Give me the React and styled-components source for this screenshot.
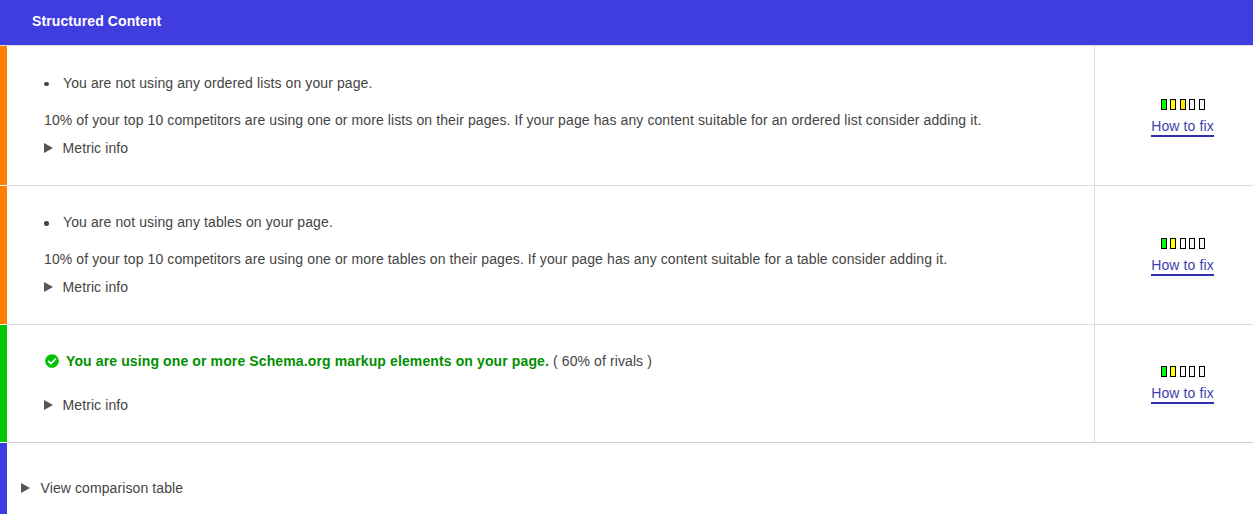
import React from 'react'
import styled, { createGlobalStyle } from 'styled-components'
import { FaCheckCircle } from 'react-icons/fa'

const GlobalStyle = createGlobalStyle`
  * { box-sizing: border-box; }
  html, body { margin: 0; background: #fff; }
  body {
    font-family: "Liberation Sans", Arial, sans-serif;
    font-size: 14px;
    line-height: 18px;
    letter-spacing: 0.1px;
    color: #444;
    overflow: hidden;
  }
`

const LEVEL_COLORS = ['#00ff00', '#ffff00', '#ffe600']

const metrics = [
  {
    accent: '#ff8000',
    level: 3,
    note: 'You are not using any ordered lists on your page.',
    detail: '10% of your top 10 competitors are using one or more lists on their pages. If your page has any content suitable for an ordered list consider adding it.',
  },
  {
    accent: '#ff8000',
    level: 2,
    note: 'You are not using any tables on your page.',
    detail: '10% of your top 10 competitors are using one or more tables on their pages. If your page has any content suitable for a table consider adding it.',
  },
  {
    accent: '#00c800',
    level: 2,
    passed: true,
    note: 'You are using one or more Schema.org markup elements on your page.',
    rivals: '( 60% of rivals )',
  },
]

const App = () => (
  <>
    <GlobalStyle />
    <Header>Structured Content</Header>
    {metrics.map((m) => (
      <Row key={m.note}>
        <Accent $color={m.accent} />
        <Main $passed={m.passed}>
          <Body $passed={m.passed}>
            {m.passed ? (
              <Passed>
                <FaCheckCircle size={14} color="#00c000" />
                <strong>{m.note}</strong>
                <span>{m.rivals}</span>
              </Passed>
            ) : (
              <>
                <Note><Bullet />{m.note}</Note>
                <p>{m.detail}</p>
              </>
            )}
            <Disclosure $top={m.passed ? 26 : 10}>
              <Triangle />
              Metric info
            </Disclosure>
          </Body>
          <Side $passed={m.passed}>
            <Meter>
              {[0, 1, 2, 3, 4].map((i) => (
                <Pip key={i} $color={i < m.level ? LEVEL_COLORS[i] : '#f7f7f7'} />
              ))}
            </Meter>
            <FixLink href="#">How to fix</FixLink>
          </Side>
        </Main>
      </Row>
    ))}
    <Footer>
      <Accent $color="#3f3de0" />
      <FooterLabel>
        <Triangle />
        View comparison table
      </FooterLabel>
    </Footer>
  </>
)

export default App

const Header = styled.header`
  height: 46px;
  padding: 12px 32px 0;
  background: #3f3de0;
  border-bottom: 1px solid #ddd;
  color: #fff;
  font-weight: 700;
`
const Row = styled.section`
  display: flex;
`
const Accent = styled.div`
  flex: none;
  width: 7px;
  margin-bottom: 1px;
  background: ${(p) => p.$color};
`
const Main = styled.div`
  flex: 1;
  display: flex;
  margin-left: 1px;
  border-bottom: 1px solid ${(p) => (p.$passed ? '#ccc' : '#ddd')};
`
const Body = styled.div`
  flex: 1;
  padding: ${(p) => (p.$passed ? '27px 36px 28px' : '27.6px 36px 28px')};
  border-right: 1px solid #ddd;

  p { margin: 0; }
`
const Note = styled.div`
  display: flex;
  align-items: center;
  margin-bottom: 19px;
`
const Bullet = styled.i`
  width: 4.5px;
  height: 4.5px;
  margin: 3px 14.5px 0 0;
  border-radius: 50%;
  background: #444;
`
const Passed = styled.div`
  display: flex;
  align-items: center;
  svg { margin: 0 7px 0 1px; }
  strong { color: #008f00; margin-right: 4px; letter-spacing: 0.12px; }
`
const Disclosure = styled.div`
  display: flex;
  align-items: center;
  margin-top: ${(p) => p.$top}px;
`
const Triangle = styled.i`
  width: 0;
  height: 0;
  margin: 0 10px 0 -0.5px;
  border-style: solid;
  border-width: 5px 0 5px 9.5px;
  border-color: transparent transparent transparent #555;
`
const Side = styled.div`
  width: 158px;
  padding: ${(p) => (p.$passed ? 3 : 5)}px 0 0 17px;
  display: flex;
  flex-direction: column;
  align-items: center;
  justify-content: center;
`
const Meter = styled.div`
  display: flex;
  gap: 3.5px;
  margin-bottom: 7px;
`
const Pip = styled.span`
  width: 6px;
  height: 11px;
  border: 1px solid #000;
  background: ${(p) => p.$color};
`
const FixLink = styled.a`
  color: #3f3fae;
  text-decoration: none;
  border-bottom: 2px solid #3030b0;
`
const Footer = styled.footer`
  display: flex;
  height: 72px;
`
const FooterLabel = styled.div`
  display: flex;
  align-items: center;
  padding: 18px 0 0 14px;

  i { margin-right: 11px; }
`
